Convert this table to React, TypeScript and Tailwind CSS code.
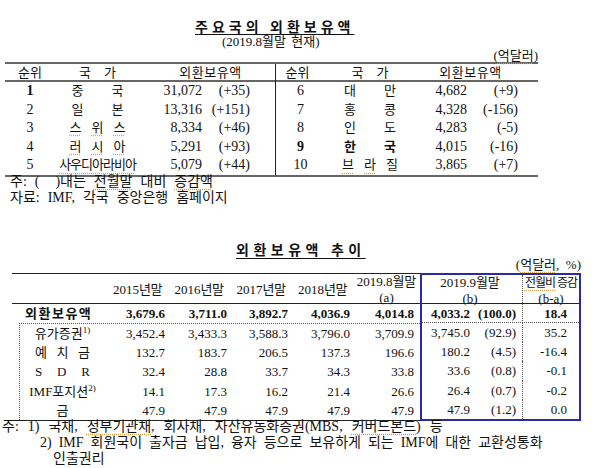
import React from "react";

const sq = "underline decoration-dotted decoration-[#d8a04a] underline-offset-[3px]";

type TopRow = { r: string; c: string[]; v: string; d: string; rb?: boolean; cb?: boolean; sq?: boolean; wide?: boolean };

const leftRows: TopRow[] = [
  { r: "1", c: ["중", "국"], v: "31,072", d: "(+35)", rb: true },
  { r: "2", c: ["일", "본"], v: "13,316", d: "(+151)" },
  { r: "3", c: ["스", "위", "스"], v: "8,334", d: "(+46)", sq: true },
  { r: "4", c: ["러", "시", "아"], v: "5,291", d: "(+93)", sq: true },
  { r: "5", c: ["사우디아라비아"], v: "5,079", d: "(+44)", sq: true, wide: true },
];
const rightRows: TopRow[] = [
  { r: "6", c: ["대", "만"], v: "4,682", d: "(+9)" },
  { r: "7", c: ["홍", "콩"], v: "4,328", d: "(-156)" },
  { r: "8", c: ["인", "도"], v: "4,283", d: "(-5)" },
  { r: "9", c: ["한", "국"], v: "4,015", d: "(-16)", rb: true, cb: true },
  { r: "10", c: ["브", "라", "질"], v: "3,865", d: "(+7)" },
];

function Country({ row }: { row: TopRow }) {
  if (row.wide) {
    return <div className={`text-center tracking-[-1px] ${sq}`}>{row.c[0]}</div>;
  }
  return (
    <div
      className={`mx-auto flex justify-between ${row.c.length === 3 ? "w-[56px]" : "w-[52px]"} ${row.cb ? "font-bold" : ""}`}
    >
      {row.c.map((ch, i) => (
        <span key={i} className={row.sq || (row.r === "10" && i < 2) ? sq : ""}>
          {ch}
        </span>
      ))}
    </div>
  );
}

type Big = { label: React.ReactNode; vals: string[]; b: string; pct: string; diff: string; spread?: string[] };

const subRows: Big[] = [
  { label: <span>유가증권<sup className="text-[9px]">1)</sup></span>, vals: ["3,452.4", "3,433.3", "3,588.3", "3,796.0", "3,709.9"], b: "3,745.0", pct: "(92.9)", diff: "35.2" },
  { label: null, spread: ["예", "치", "금"], vals: ["132.7", "183.7", "206.5", "137.3", "196.6"], b: "180.2", pct: "(4.5)", diff: "-16.4" },
  { label: null, spread: ["S", "D", "R"], vals: ["32.4", "28.8", "33.7", "34.3", "33.8"], b: "33.6", pct: "(0.8)", diff: "-0.1" },
  { label: <span>IMF포지션<sup className="text-[9px]">2)</sup></span>, vals: ["14.1", "17.3", "16.2", "21.4", "26.6"], b: "26.4", pct: "(0.7)", diff: "-0.2" },
  { label: <span>금</span>, vals: ["47.9", "47.9", "47.9", "47.9", "47.9"], b: "47.9", pct: "(1.2)", diff: "0.0" },
];

const valPad = ["pr-[3px]", "pr-[3px]", "pr-[4px]", "pr-[3px]", "pr-[6px]"];

export default function App() {
  return (
    <div className="w-[600px] h-[468px] bg-white text-[#111] font-['Liberation_Serif','Noto_Sans_CJK_KR',serif] overflow-hidden relative">
      {/* Top section */}
      <div className="pt-[15px]">
        <div className="pl-[195px] h-[19px]">
          <span className="text-[14px] leading-[18px] font-bold tracking-[4px] underline underline-offset-[2px] whitespace-nowrap">
            주요국의 외환보유액
          </span>
        </div>
        <div className="pl-[222px] text-[13px] leading-[16px] h-[16px] [word-spacing:2px] whitespace-nowrap">(2019.8월말 현재)</div>
        <div className="w-[538px] flex justify-end text-[13px] leading-[12px] h-[12px]">
          <span>
            (<span className={sq}>억달러</span>)
          </span>
        </div>
        <div className="ml-[5px] w-[533px] border-t-2 border-b-2 border-[#666] text-[13px]">
          <div className="grid grid-cols-[50px_85px_65px_70px_50px_90px_57px_66px] h-[18px] leading-[18px] border-b-2 border-[#666]">
            <div className="text-center">순위</div>
            <div className="mx-auto w-[37px] flex justify-between"><span>국</span><span>가</span></div>
            <div className="col-span-2 text-center pl-[6px] tracking-[0.5px]">외환보유액</div>
            <div className="text-center border-l border-[#222] pr-[6px]">순위</div>
            <div className="mx-auto w-[37px] flex justify-between"><span>국</span><span>가</span></div>
            <div className="col-span-2 text-center pr-[12px] tracking-[0.5px]">외환보유액</div>
          </div>
          {leftRows.map((lr, i) => {
            const rr = rightRows[i];
            return (
              <div key={i} className="grid grid-cols-[50px_85px_65px_70px_50px_90px_57px_66px] h-[18.6px] leading-[18.6px]">
                <div className={`text-center text-[14px] ${lr.rb ? "font-bold" : ""}`}>{lr.r}</div>
                <Country row={lr} />
                <div className="text-right pr-[3px] text-[14px]">{lr.v}</div>
                <div className="text-right pr-[25px] text-[14px]">{lr.d}</div>
                <div className={`text-center border-l border-[#222] text-[14px] ${rr.rb ? "font-bold" : ""}`}>{rr.r}</div>
                <Country row={rr} />
                <div className="text-right pr-[5px] text-[14px]">{rr.v}</div>
                <div className="text-right pr-[20px] text-[14px]">{rr.d}</div>
              </div>
            );
          })}
        </div>
        <div className="pl-[10px] mt-[-3px] text-[14px] leading-[16.5px] [word-spacing:4.5px]">
          <div>
            주: ( &nbsp;)내는 <span className={sq}>전월말</span> 대비 <span className={sq}>증감액</span>
          </div>
          <div>자료: IMF, 각국 중앙은행 홈페이지</div>
        </div>
      </div>

      {/* Bottom section */}
      <div className="mt-[31px]">
        <div className="pl-[236px] h-[18px]">
          <span className="text-[14px] leading-[18px] font-bold tracking-[4.5px] underline underline-offset-[3px] whitespace-nowrap">
            외환보유액 추이
          </span>
        </div>
        <div className="w-[581px] flex justify-end text-[13px] leading-[17px] h-[17px]">
          <span>
            (<span className={sq}>억달러</span>, &nbsp;%)
          </span>
        </div>
        <div className="ml-[12px] flex text-[13px]">
          {/* left part */}
          <div className="w-[408px] border-b border-[#222]">
            <div className="grid grid-cols-[93px_63px_62px_62px_61px_67px] h-[31px] border-t border-b border-[#222] items-center leading-[16px]">
              <div />
              <div className="text-center pl-[2px]">2015<span className="tracking-[-0.5px]">년말</span></div>
              <div className="text-center">2016<span className="tracking-[-0.5px]">년말</span></div>
              <div className="text-center">2017<span className="tracking-[-0.5px]">년말</span></div>
              <div className="text-center">2018<span className="tracking-[-0.5px]">년말</span></div>
              <div className="text-center">
                <div>2019.8월말</div>
                <div>(a)</div>
              </div>
            </div>
            <div className="grid grid-cols-[93px_63px_62px_62px_61px_67px] h-[19px] leading-[19px] font-bold">
              <div className="pl-[13px] tracking-[1.5px]">외환보유액</div>
              {["3,679.6", "3,711.0", "3,892.7", "4,036.9", "4,014.8"].map((v, i) => (
                <div key={i} className={`text-right ${valPad[i]}`}>{v}</div>
              ))}
            </div>
            <div className="ml-[7px] border-l border-t border-dotted border-[#555]">
              {subRows.map((r, ri) => (
                <div key={ri} className="grid grid-cols-[85px_63px_62px_62px_61px_67px] h-[19.2px] leading-[19.2px]">
                  <div className="text-center">
                    {r.spread ? (
                      <div className="mx-auto w-[55px] flex justify-between">
                        {r.spread.map((s, k) => (
                          <span key={k}>{s}</span>
                        ))}
                      </div>
                    ) : (
                      r.label
                    )}
                  </div>
                  {r.vals.map((v, i) => (
                    <div key={i} className={`text-right ${valPad[i]}`}>{v}</div>
                  ))}
                </div>
              ))}
            </div>
          </div>
          {/* right blue box */}
          <div className="w-[161px] border-2 border-[#2a2aa6]">
            <div className="grid grid-cols-[50px_50px_57px] h-[29px] border-b border-[#222] leading-[16px] items-stretch">
              <div className="col-span-2 text-center flex flex-col justify-center pr-[4px]">
                <div>2019.9월말</div>
                <div>(b)</div>
              </div>
              <div className="text-center border-l border-dotted border-[#555] flex flex-col justify-center">
                <div className="text-[12px] tracking-[-1px] whitespace-nowrap">
                  <span className={sq}>전월비</span> 증감
                </div>
                <div>(b-a)</div>
              </div>
            </div>
            <div className="grid grid-cols-[50px_50px_57px] h-[19px] leading-[19px] font-bold border-b border-dotted border-[#555]">
              <div className="text-right pr-[2px]">4,033.2</div>
              <div className="text-right pr-[6px]">(100.0)</div>
              <div className="text-right pr-[12px] border-l border-dotted border-[#555]">18.4</div>
            </div>
            {subRows.map((r, ri) => (
              <div key={ri} className="grid grid-cols-[50px_50px_57px] h-[19.2px] leading-[19.2px]">
                <div className="text-right pr-[2px]">{r.b}</div>
                <div className="text-right pr-[6px]">{r.pct}</div>
                <div className="text-right pr-[12px] border-l border-dotted border-[#555]">{r.diff}</div>
              </div>
            ))}
          </div>
        </div>
        <div className="mt-[-2px] text-[14px] leading-[16px] pl-[2px] whitespace-nowrap">
          <div className="[word-spacing:5.5px]">
            주: 1) 국채, <span className={sq}>정부기관채</span>, 회사채, 자산유동화증권(MBS, <span className={sq}>커버드본드</span>) 등
          </div>
          <div className="pl-[38px] [word-spacing:3.5px]">2) IMF 회원국이 출자금 납입, 융자 등으로 보유하게 되는 IMF에 대한 교환성통화</div>
          <div className="pl-[51px]">인출권리</div>
        </div>
      </div>
    </div>
  );
}
